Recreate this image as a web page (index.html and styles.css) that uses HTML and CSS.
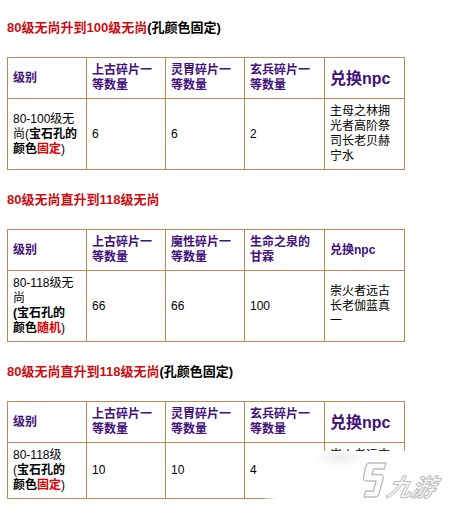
FILE: index.html
```html
<!DOCTYPE html>
<html lang="zh-CN">
<head>
<meta charset="utf-8">
<title>无尚升级</title>
<link rel="stylesheet" href="styles.css">
</head>
<body>
<div class="page">
  <section class="block">
    <h2 class="title"><span class="red">80级无尚升到100级无尚</span>(孔颜色固定)</h2>
    <table class="grid">
      <colgroup><col class="c1"><col class="c2"><col class="c3"><col class="c4"><col class="c5"></colgroup>
      <tr class="head">
        <td>级别</td>
        <td>上古碎片一等数量</td>
        <td>灵胄碎片一等数量</td>
        <td>玄兵碎片一等数量</td>
        <td class="big">兑换npc</td>
      </tr>
      <tr class="body4">
        <td>80-100级无<br>尚(<b>宝石孔的<br>颜色<span class="hot">固定</span></b>)</td>
        <td>6</td>
        <td>6</td>
        <td>2</td>
        <td>主母之林拥<br>光者高阶祭<br>司长老贝赫<br>宁水</td>
      </tr>
    </table>
  </section>

  <section class="block">
    <h2 class="title"><span class="red">80级无尚直升到118级无尚</span></h2>
    <table class="grid">
      <colgroup><col class="c1"><col class="c2"><col class="c3"><col class="c4"><col class="c5"></colgroup>
      <tr class="head">
        <td>级别</td>
        <td>上古碎片一等数量</td>
        <td>魔性碎片一等数量</td>
        <td>生命之泉的甘霖</td>
        <td>兑换npc</td>
      </tr>
      <tr class="body4">
        <td>80-118级无<br>尚<br><b>(宝石孔的<br>颜色<span class="hot">随机</span></b>)</td>
        <td>66</td>
        <td>66</td>
        <td>100</td>
        <td>崇火者远古<br>长老伽蓝真<br>一</td>
      </tr>
    </table>
  </section>

  <section class="block">
    <h2 class="title"><span class="red">80级无尚直升到118级无尚</span>(孔颜色固定)</h2>
    <table class="grid">
      <colgroup><col class="c1"><col class="c2"><col class="c3"><col class="c4"><col class="c5"></colgroup>
      <tr class="head">
        <td>级别</td>
        <td>上古碎片一等数量</td>
        <td>灵胄碎片一等数量</td>
        <td>玄兵碎片一等数量</td>
        <td class="big">兑换npc</td>
      </tr>
      <tr>
        <td>80-118级<br>(<b>宝石孔的<br>颜色<span class="hot">固定</span></b>)</td>
        <td>10</td>
        <td>10</td>
        <td>4</td>
        <td>崇火者远古<br>长老伽蓝真<br>一</td>
      </tr>
    </table>
  </section>

  <div class="watermark">
    <svg class="wm-logo" width="26" height="36" viewBox="0 0 26 36" aria-hidden="true">
      <path d="M9 1 L25 1 L23.2 7 L12.5 7 L11 12.5 L18.5 12.5 Q23 12.5 22 17 L18.3 31 Q17.3 35 13 35 L3 35 L4.7 29 L12.5 29 L15 19 L6 19 Q1.5 19 2.5 14.5 L4.3 6 Q5.3 1 9 1 Z" fill="#fbfbfb" stroke="#bdbdbd" stroke-width="1.3" stroke-linejoin="round"/>
    </svg>
    <span class="wm-text">九游</span>
  </div>
</div>
</body>
</html>
```
FILE: styles.css
```css
html, body {
  margin: 0;
  padding: 0;
  background: #ffffff;
}

body {
  font-family: "Liberation Sans", "Noto Sans CJK SC", sans-serif;
  color: #000000;
}

.page {
  position: relative;
  box-sizing: border-box;
  width: 452px;
  height: 513px;
  overflow: hidden;
  padding: 20px 7px 0;
}

.block + .block {
  margin-top: 22px;
}

.title {
  margin: 0;
  font-size: 13px;
  line-height: 16px;
  font-weight: bold;
  color: #000000;
}

.title .red {
  color: #cc0d12;
}

.grid {
  margin-top: 21px;
  border-collapse: collapse;
  table-layout: fixed;
  width: 398px;
}

.c1, .c2, .c3 {
  width: 79px;
}

.c4, .c5 {
  width: 80px;
}

.grid td {
  border: 1px solid #bb8b55;
  padding: 5px;
  font-size: 12px;
  line-height: 15px;
  vertical-align: middle;
  white-space: nowrap;
}

.head td {
  color: #42117a;
  font-weight: bold;
  white-space: normal;
  word-break: break-all;
}

.head td.big {
  font-size: 16px;
}

.body4 td {
  height: 60px;
}

.grid b {
  font-weight: bold;
}

.hot {
  color: #e00000;
}

.watermark {
  position: absolute;
  left: 262px;
  top: 451px;
  right: 0;
  bottom: 0;
  background:
    radial-gradient(ellipse 28px 10px at 78px 7px, rgba(0, 0, 0, 0.07), rgba(0, 0, 0, 0)),
    linear-gradient(to right, rgba(255, 255, 255, 0) 0, #ffffff 14px);
}

.wm-logo {
  position: absolute;
  left: 99px;
  top: 11px;
}

.wm-text {
  position: absolute;
  left: 126px;
  top: 22px;
  font-family: "Noto Sans CJK SC", sans-serif;
  font-size: 24px;
  line-height: 26px;
  font-style: italic;
  font-weight: bold;
  color: #fbfbfb;
  -webkit-text-stroke: 1px #bdbdbd;
  transform: skewX(-14deg);
  letter-spacing: 0;
}
```
